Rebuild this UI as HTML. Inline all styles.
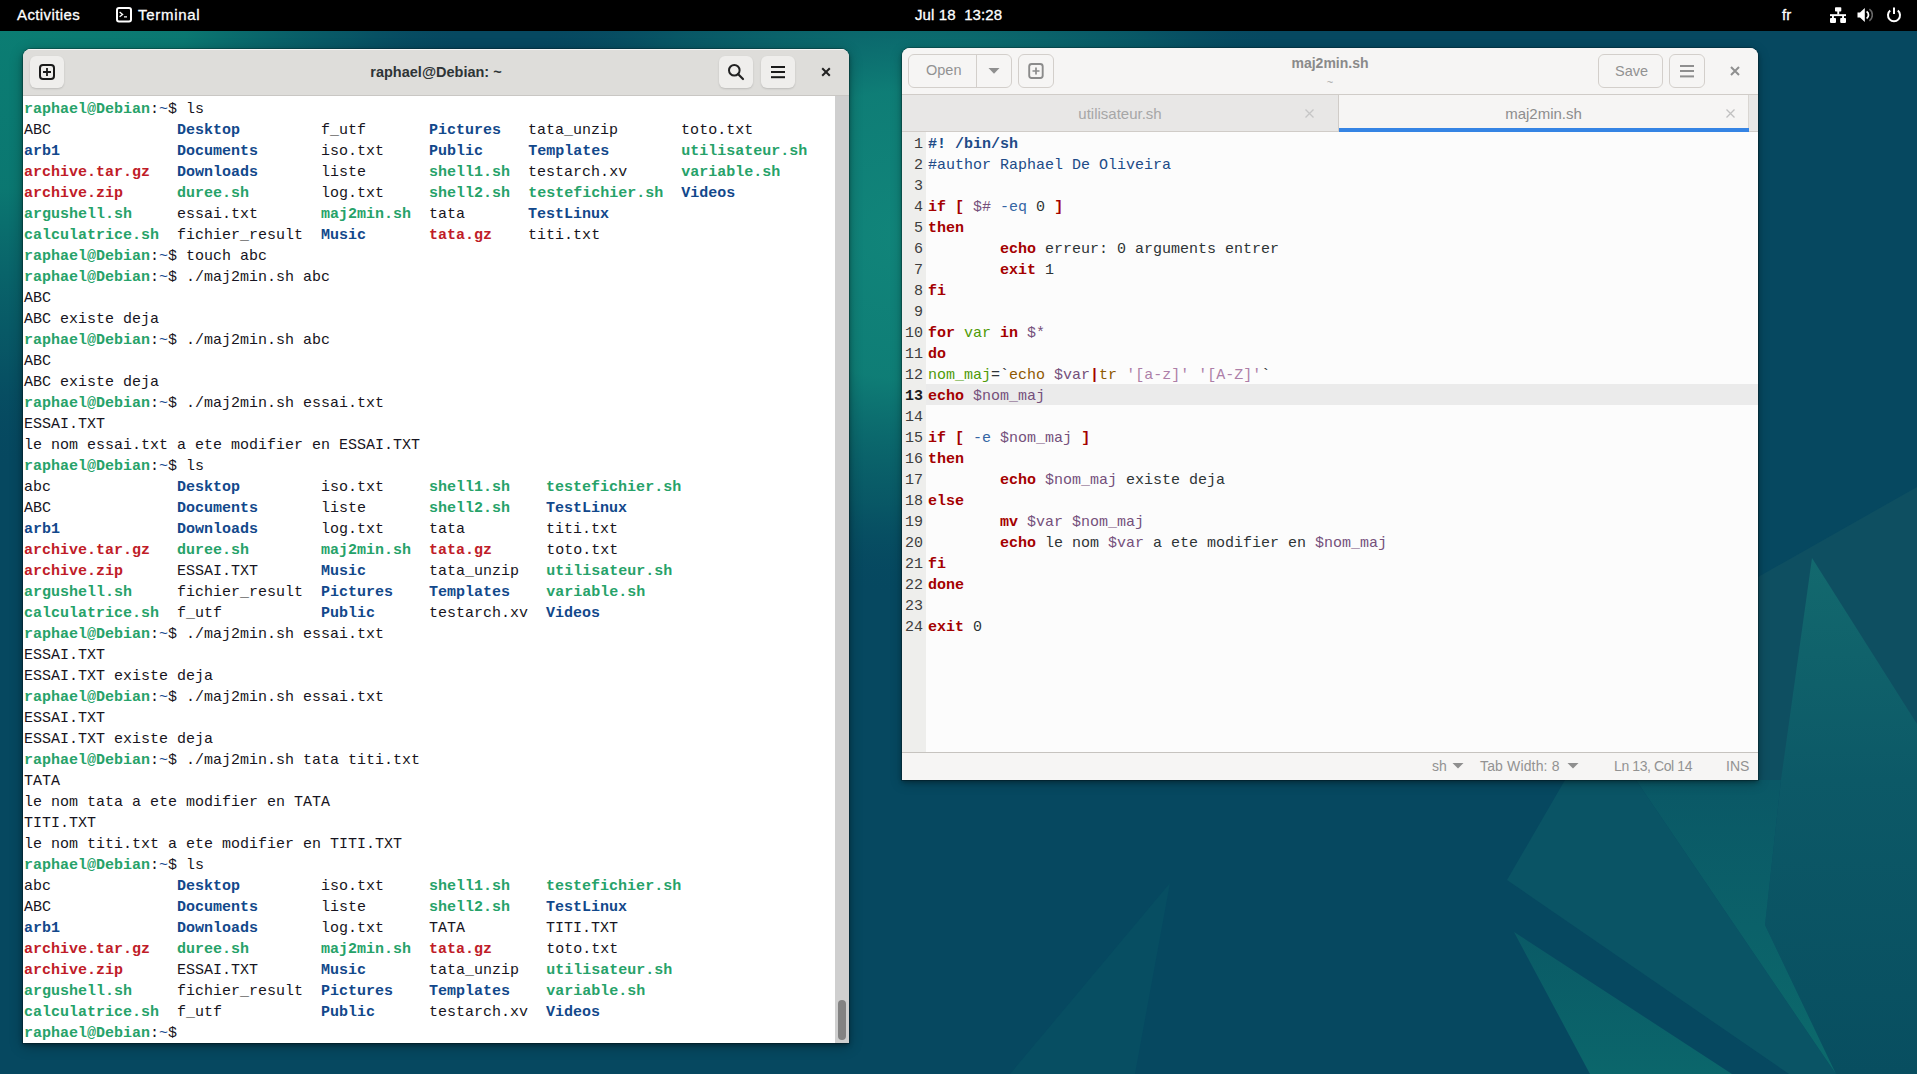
<!DOCTYPE html>
<html><head><meta charset="utf-8">
<style>
*{margin:0;padding:0;box-sizing:border-box}
html,body{width:1917px;height:1074px;overflow:hidden}
body{position:relative;background:#064860;font-family:"Liberation Sans",sans-serif}
.abs{position:absolute}
#wall{position:absolute;left:0;top:0;width:1917px;height:1074px}
/* top bar */
#topbar{position:absolute;left:0;top:0;width:1917px;height:31px;background:#000;color:#fff;font-size:15px}
#topbar .t{position:absolute;top:6px;line-height:18px;white-space:pre;-webkit-text-stroke:0.3px #fff}
/* terminal window */
#term{position:absolute;left:23px;top:49px;width:826px;height:994px;border-radius:8px 8px 0 0;box-shadow:0 0 0 1px rgba(0,0,0,.2),0 2px 4px rgba(0,0,0,.35),0 3px 14px rgba(0,0,0,.3);overflow:hidden;background:#fff}
#term .hb{position:absolute;left:0;top:0;width:826px;height:47px;background:#deddda;border-bottom:1px solid #c9c7c4;box-shadow:inset 0 1px rgba(255,255,255,.7)}
.btn{position:absolute;border-radius:6px;background:#efeeec;box-shadow:0 1px 2px rgba(0,0,0,.15)}
#term .title{position:absolute;left:0;width:826px;top:14px;text-align:center;font-size:14.5px;font-weight:bold;color:#2e3436;line-height:18px}
#tt{position:absolute;left:1px;top:50px;font-family:"Liberation Mono",monospace;font-size:15px;line-height:21px;color:#171421;white-space:pre}
#tt .g{color:#26a269;font-weight:bold}
#tt .b{color:#12488b;font-weight:bold}
#tt .r{color:#c01c28;font-weight:bold}
#tt .t{color:#12488b}
#term .sb{position:absolute;left:812px;top:47px;width:14px;height:947px;background:#cfcfcf}
#term .thumb{position:absolute;left:815px;top:951px;width:8px;height:40px;border-radius:4px;background:#828282}
/* gedit */
#ged{position:absolute;left:902px;top:48px;width:856px;height:732px;border-radius:8px 8px 0 0;box-shadow:0 0 0 1px rgba(0,0,0,.2),0 2px 4px rgba(0,0,0,.3),0 3px 12px rgba(0,0,0,.25);overflow:hidden;background:#fcfcfc}
#ged .hb{position:absolute;left:0;top:0;width:856px;height:47px;background:#f6f5f4;border-bottom:1px solid #d0ccc8}
.gbtn{position:absolute;border:1px solid #d3cfcb;border-radius:6px;background:#f6f5f4;color:#929292;font-size:14px;text-align:center}
#ged .tabs{position:absolute;left:0;top:46px;width:856px;height:38px;background:#e8e7e6;border-top:1px solid #d0ccc8;border-bottom:1px solid #d0ccc8}
#ged .tab{position:absolute;top:0;height:37px;font-size:15px;text-align:center;line-height:37px}
#gutter{position:absolute;left:0;top:84px;width:24px;height:620px;background:#eeeeec}
#nums{position:absolute;left:0;top:86px;width:21px;text-align:right;font-family:"Liberation Mono",monospace;font-size:15px;line-height:21px;color:#3d3d3d;white-space:pre}
#nums b{color:#1c1c1c}
#curline{position:absolute;left:24px;top:336px;width:832px;height:21px;background:#ebebeb}
#code{position:absolute;left:26px;top:86px;font-family:"Liberation Mono",monospace;font-size:15px;line-height:21px;color:#2e3436;white-space:pre}
#code .k{color:#a40000;font-weight:bold}
#code .sb{color:#204a87;font-weight:bold}
#code .cm{color:#204a87}
#code .v{color:#75507b}
#code .vn{color:#4e9a06}
#code .op{color:#3465a4}
#code .bt{color:#8f5902}
#code .pipe{color:#a40000;font-weight:bold}
#code .s{color:#ad7fa8}
#ged .status{position:absolute;left:0;top:704px;width:856px;height:28px;background:#f6f5f4;border-top:1px solid #c6c3bf;font-size:14px;color:#929292}
#ged .status span{position:absolute;top:4px;line-height:18px;white-space:pre}
</style></head><body>
<svg id="wall" width="1917" height="1074" viewBox="0 0 1917 1074">
  <defs>
    <radialGradient id="rL" gradientUnits="userSpaceOnUse" cx="0" cy="0" r="470"><stop offset="0" stop-color="#0b7e73"/><stop offset="0.4" stop-color="#0b7a72" stop-opacity="0.95"/><stop offset="0.75" stop-color="#0a6a6c" stop-opacity="0.4"/><stop offset="1" stop-color="#064860" stop-opacity="0"/></radialGradient>
    <radialGradient id="rM" gradientUnits="userSpaceOnUse" cx="910" cy="235" r="360" gradientTransform="translate(910 235) scale(1.25 1) translate(-910 -235)"><stop offset="0" stop-color="#11857a"/><stop offset="0.4" stop-color="#0f8077" stop-opacity="0.95"/><stop offset="0.75" stop-color="#0b6a6c" stop-opacity="0.45"/><stop offset="1" stop-color="#064860" stop-opacity="0"/></radialGradient>
    <linearGradient id="gB" x1="0" y1="0" x2="0" y2="1"><stop offset="0" stop-color="#0a5a66"/><stop offset="1" stop-color="#0b666b"/></linearGradient>
    <linearGradient id="gC" x1="0" y1="0" x2="0" y2="1"><stop offset="0" stop-color="#0a5866"/><stop offset="1" stop-color="#0c6a6c"/></linearGradient>
    <linearGradient id="gT" x1="0" y1="0" x2="0" y2="1"><stop offset="0" stop-color="#13696e"/><stop offset="0.43" stop-color="#0c5967"/><stop offset="1" stop-color="#084e60"/></linearGradient>
  </defs>
  <rect width="1917" height="1074" fill="#064860"/>
  <rect width="1917" height="1074" fill="url(#rL)"/>
  <rect width="1917" height="1074" fill="url(#rM)"/>
  <polygon points="1917,487 1758,577 1758,780 1917,780" fill="#0e4f61"/>
  <polygon points="1812,558 1917,724 1917,1074 1836,1074 1765,925 1781,780" fill="url(#gT)"/>
  <polygon points="1507,880 1565,780 1636,780 1836,1074 1789,1074" fill="#0a5465"/>
  <polygon points="1514,932 1590,1074 1732,1074" fill="url(#gB)"/>
  <polygon points="1636,780 1781,780 1765,925 1836,1074" fill="url(#gC)"/>
    <polygon points="1170,883 1135,1074 1010,1074" fill="#074e62"/>
</svg>

<div id="topbar">
  <span class="t" style="left:17px;letter-spacing:.4px">Activities</span>
  <svg class="abs" style="left:115px;top:6px" width="18" height="17" viewBox="0 0 18 17"><rect x="2" y="2" width="14" height="13.5" rx="2" fill="none" stroke="#fff" stroke-width="2"/><path d="M4.6 6l3 2.4-3 2.4M9 10.8h3" fill="none" stroke="#fff" stroke-width="1.3"/></svg>
  <span class="t" style="left:138px;letter-spacing:.7px">Terminal</span>
  <span class="t" style="left:915px;letter-spacing:.1px">Jul 18  13:28</span>
  <span class="t" style="left:1782px">fr</span>
  <svg class="abs" style="left:1830px;top:7px" width="16" height="16" viewBox="0 0 16 16" fill="#fff"><rect x="5" y="0.3" width="6.3" height="4.2" rx=".8"/><rect x="7.3" y="4" width="1.9" height="3.5"/><rect x="0" y="7.2" width="16" height="1.9"/><rect x="2" y="8.5" width="1.9" height="3"/><rect x="12.1" y="8.5" width="1.9" height="3"/><rect x="0" y="11" width="6" height="4.9" rx=".8"/><rect x="10.2" y="11" width="5.8" height="4.9" rx=".8"/></svg>
  <svg class="abs" style="left:1857px;top:7px" width="16" height="16" viewBox="0 0 16 16"><path d="M0.5 5.5h2.5l4.8-4.5v14l-4.8-4.5h-2.5z" fill="#fff"/><path d="M9.6 4.6a4 4 0 0 1 0 6.8" fill="none" stroke="#fff" stroke-width="1.8"/><path d="M12.4 2.2a7.2 7.2 0 0 1 0 11.6" fill="none" stroke="#666" stroke-width="1.6"/></svg>
  <svg class="abs" style="left:1886px;top:7px" width="16" height="16" viewBox="0 0 16 16"><path d="M4.2 3.6a6 6 0 1 0 7.6 0" fill="none" stroke="#fff" stroke-width="2"/><path d="M8 0.5v6.5" stroke="#fff" stroke-width="2"/></svg>
</div>

<div id="term">
  <div class="hb">
    <div class="btn" style="left:7px;top:7px;width:34px;height:32px"></div>
    <svg class="abs" style="left:15px;top:14px" width="18" height="18" viewBox="0 0 18 18"><rect x="2" y="2" width="14" height="14" rx="3" fill="none" stroke="#1a1a1a" stroke-width="2"/><path d="M5 9h8M9 5v8" stroke="#1a1a1a" stroke-width="1.8"/></svg>
    <div class="title">raphael@Debian: ~</div>
    <div class="btn" style="left:696px;top:7px;width:34px;height:32px"></div>
    <svg class="abs" style="left:702px;top:13px" width="22" height="22" viewBox="0 0 22 22"><circle cx="9.3" cy="8.2" r="5.3" fill="none" stroke="#222" stroke-width="2"/><path d="M13 12l5 5" stroke="#222" stroke-width="2.2" stroke-linecap="round"/></svg>
    <div class="btn" style="left:738px;top:7px;width:34px;height:32px"></div>
    <svg class="abs" style="left:748px;top:16px" width="14" height="14" viewBox="0 0 14 14" fill="#1a1a1a"><rect x="0" y="1" width="14" height="2"/><rect x="0" y="6" width="14" height="2"/><rect x="0" y="11.2" width="14" height="2"/></svg>
    <svg class="abs" style="left:798px;top:18px" width="10" height="10" viewBox="0 0 10 10"><path d="M1.2 1.2l7.6 7.6M8.8 1.2l-7.6 7.6" stroke="#222" stroke-width="2"/></svg>
  </div>
  <div id="tt"><span class="g">raphael@Debian</span>:<span class="t">~</span>$ ls
ABC              <span class="b">Desktop</span>         f_utf       <span class="b">Pictures</span>   tata_unzip       toto.txt
<span class="b">arb1</span>             <span class="b">Documents</span>       iso.txt     <span class="b">Public</span>     <span class="b">Templates</span>        <span class="g">utilisateur.sh</span>
<span class="r">archive.tar.gz</span>   <span class="b">Downloads</span>       liste       <span class="g">shell1.sh</span>  testarch.xv      <span class="g">variable.sh</span>
<span class="r">archive.zip</span>      <span class="g">duree.sh</span>        log.txt     <span class="g">shell2.sh</span>  <span class="g">testefichier.sh</span>  <span class="b">Videos</span>
<span class="g">argushell.sh</span>     essai.txt       <span class="g">maj2min.sh</span>  tata       <span class="b">TestLinux</span>
<span class="g">calculatrice.sh</span>  fichier_result  <span class="b">Music</span>       <span class="r">tata.gz</span>    titi.txt
<span class="g">raphael@Debian</span>:<span class="t">~</span>$ touch abc
<span class="g">raphael@Debian</span>:<span class="t">~</span>$ ./maj2min.sh abc
ABC
ABC existe deja
<span class="g">raphael@Debian</span>:<span class="t">~</span>$ ./maj2min.sh abc
ABC
ABC existe deja
<span class="g">raphael@Debian</span>:<span class="t">~</span>$ ./maj2min.sh essai.txt
ESSAI.TXT
le nom essai.txt a ete modifier en ESSAI.TXT
<span class="g">raphael@Debian</span>:<span class="t">~</span>$ ls
abc              <span class="b">Desktop</span>         iso.txt     <span class="g">shell1.sh</span>    <span class="g">testefichier.sh</span>
ABC              <span class="b">Documents</span>       liste       <span class="g">shell2.sh</span>    <span class="b">TestLinux</span>
<span class="b">arb1</span>             <span class="b">Downloads</span>       log.txt     tata         titi.txt
<span class="r">archive.tar.gz</span>   <span class="g">duree.sh</span>        <span class="g">maj2min.sh</span>  <span class="r">tata.gz</span>      toto.txt
<span class="r">archive.zip</span>      ESSAI.TXT       <span class="b">Music</span>       tata_unzip   <span class="g">utilisateur.sh</span>
<span class="g">argushell.sh</span>     fichier_result  <span class="b">Pictures</span>    <span class="b">Templates</span>    <span class="g">variable.sh</span>
<span class="g">calculatrice.sh</span>  f_utf           <span class="b">Public</span>      testarch.xv  <span class="b">Videos</span>
<span class="g">raphael@Debian</span>:<span class="t">~</span>$ ./maj2min.sh essai.txt
ESSAI.TXT
ESSAI.TXT existe deja
<span class="g">raphael@Debian</span>:<span class="t">~</span>$ ./maj2min.sh essai.txt
ESSAI.TXT
ESSAI.TXT existe deja
<span class="g">raphael@Debian</span>:<span class="t">~</span>$ ./maj2min.sh tata titi.txt
TATA
le nom tata a ete modifier en TATA
TITI.TXT
le nom titi.txt a ete modifier en TITI.TXT
<span class="g">raphael@Debian</span>:<span class="t">~</span>$ ls
abc              <span class="b">Desktop</span>         iso.txt     <span class="g">shell1.sh</span>    <span class="g">testefichier.sh</span>
ABC              <span class="b">Documents</span>       liste       <span class="g">shell2.sh</span>    <span class="b">TestLinux</span>
<span class="b">arb1</span>             <span class="b">Downloads</span>       log.txt     TATA         TITI.TXT
<span class="r">archive.tar.gz</span>   <span class="g">duree.sh</span>        <span class="g">maj2min.sh</span>  <span class="r">tata.gz</span>      toto.txt
<span class="r">archive.zip</span>      ESSAI.TXT       <span class="b">Music</span>       tata_unzip   <span class="g">utilisateur.sh</span>
<span class="g">argushell.sh</span>     fichier_result  <span class="b">Pictures</span>    <span class="b">Templates</span>    <span class="g">variable.sh</span>
<span class="g">calculatrice.sh</span>  f_utf           <span class="b">Public</span>      testarch.xv  <span class="b">Videos</span>
<span class="g">raphael@Debian</span>:<span class="t">~</span>$ </div>
  <div class="sb"></div>
  <div class="thumb"></div>
</div>

<div id="ged">
  <div class="hb">
    <div class="gbtn" style="left:6px;top:6px;width:104px;height:34px"></div>
    <div class="abs" style="left:74px;top:7px;width:1px;height:32px;background:#d3cfcb"></div>
    <span class="abs" style="left:24px;top:13px;font-size:14.5px;line-height:18px;color:#929292">Open</span>
    <svg class="abs" style="left:86px;top:20px" width="12" height="6" viewBox="0 0 12 6"><path d="M0.5 0h11l-5.5 5.8z" fill="#8f8f8f"/></svg>
    <div class="gbtn" style="left:116px;top:6px;width:36px;height:34px"></div>
    <svg class="abs" style="left:125px;top:14px" width="18" height="18" viewBox="0 0 18 18"><rect x="2.2" y="2" width="13.5" height="14" rx="2.5" fill="none" stroke="#8b8b8b" stroke-width="1.9"/><path d="M5.5 9h7M9 5.5v7" stroke="#8b8b8b" stroke-width="1.7"/></svg>
    <div class="abs" style="left:0;width:856px;top:6px;text-align:center;font-size:14px;font-weight:bold;color:#8a8a8a;line-height:18px">maj2min.sh</div>
    <div class="abs" style="left:0;width:856px;top:28px;text-align:center;font-size:11px;color:#a8a8a8;line-height:12px">~</div>
    <div class="gbtn" style="left:696px;top:6px;width:65px;height:34px"></div>
    <span class="abs" style="left:713px;top:14px;font-size:14.5px;line-height:18px;color:#929292">Save</span>
    <div class="gbtn" style="left:767px;top:6px;width:36px;height:34px"></div>
    <svg class="abs" style="left:778px;top:17px" width="14" height="13" viewBox="0 0 14 13" fill="#8f8f8f"><rect x="0" y="0" width="14" height="2"/><rect x="0" y="5" width="14" height="2"/><rect x="0" y="10.4" width="14" height="2"/></svg>
    <svg class="abs" style="left:828px;top:18px" width="10" height="10" viewBox="0 0 10 10"><path d="M1 1l8 8M9 1l-8 8" stroke="#8f8f8f" stroke-width="2"/></svg>
  </div>
  <div class="tabs">
    <div class="tab" style="left:0;width:436px;color:#a6a6a6">utilisateur.sh</div>
    <svg class="abs" style="left:403px;top:14px" width="9" height="9" viewBox="0 0 9 9"><path d="M.5 .5l8 8M8.5 .5l-8 8" stroke="#c6c6c6" stroke-width="1.3"/></svg>
    <div class="tab" style="left:436px;width:411px;background:#f6f5f4;border-left:1px solid #d0ccc8;border-right:1px solid #d9d6d2;color:#8d8d8d">maj2min.sh</div>
    <div class="abs" style="left:437px;top:33px;width:410px;height:4px;background:#3584e4"></div>
    <svg class="abs" style="left:824px;top:14px" width="9" height="9" viewBox="0 0 9 9"><path d="M.5 .5l8 8M8.5 .5l-8 8" stroke="#c0c0c0" stroke-width="1.3"/></svg>
  </div>
  <div id="gutter"></div>
  <div id="curline"></div>
  <div id="nums">1
2
3
4
5
6
7
8
9
10
11
12
<b>13</b>
14
15
16
17
18
19
20
21
22
23
24</div>
  <div id="code"><span class="sb">#! /bin/sh</span>
<span class="cm">#author Raphael De Oliveira</span>

<span class="k">if</span> <span class="k">[</span> <span class="v">$#</span> <span class="op">-eq</span> 0 <span class="k">]</span>
<span class="k">then</span>
        <span class="k">echo</span> erreur: 0 arguments entrer
        <span class="k">exit</span> 1
<span class="k">fi</span>

<span class="k">for</span> <span class="vn">var</span> <span class="k">in</span> <span class="v">$*</span>
<span class="k">do</span>
<span class="vn">nom_maj</span>=`<span class="bt">echo</span> <span class="v">$var</span><span class="pipe">|</span><span class="bt">tr</span> <span class="s">&#x27;[a-z]&#x27;</span> <span class="s">&#x27;[A-Z]&#x27;</span>`
<span class="k">echo</span> <span class="v">$nom_maj</span>

<span class="k">if</span> <span class="k">[</span> <span class="op">-e</span> <span class="v">$nom_maj</span> <span class="k">]</span>
<span class="k">then</span>
        <span class="k">echo</span> <span class="v">$nom_maj</span> existe deja
<span class="k">else</span>
        <span class="k">mv</span> <span class="v">$var</span> <span class="v">$nom_maj</span>
        <span class="k">echo</span> le nom <span class="v">$var</span> a ete modifier en <span class="v">$nom_maj</span>
<span class="k">fi</span>
<span class="k">done</span>

<span class="k">exit</span> 0</div>
  <div class="status">
    <span style="left:530px">sh</span>
    <svg class="abs" style="left:550px;top:10px" width="12" height="6" viewBox="0 0 12 6"><path d="M0.5 0h11l-5.5 5.5z" fill="#8f8f8f"/></svg>
    <span style="left:578px;letter-spacing:.15px">Tab Width: 8</span>
    <svg class="abs" style="left:665px;top:10px" width="12" height="6" viewBox="0 0 12 6"><path d="M0.5 0h11l-5.5 5.5z" fill="#8f8f8f"/></svg>
    <span style="left:712px;letter-spacing:-.4px">Ln 13, Col 14</span>
    <span style="left:824px">INS</span>
  </div>
</div>
</body></html>
